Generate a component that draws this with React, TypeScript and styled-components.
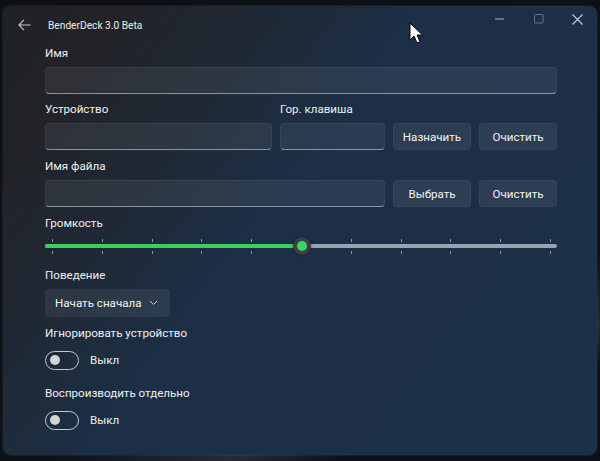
import React from "react";
import styled, { createGlobalStyle } from "styled-components";

const Global = createGlobalStyle`
  html, body { margin: 0; padding: 0; }
  body {
    width: 600px;
    height: 461px;
    overflow: hidden;
    background: #0d1016;
    font-family: Roboto, "Noto Sans", sans-serif;
  }
`;

const Desktop = styled.div`
  position: relative;
  width: 600px;
  height: 461px;
  padding: 6px 3px 0 3px;
  box-sizing: border-box;
  background:
    linear-gradient(160deg, transparent 70%, rgba(150,165,185,0.18) 80%, transparent 86%),
    #0d1016;
`;

const Window = styled.div`
  width: 594px;
  height: 449px;
  border-radius: 8px;
  overflow: hidden;
  display: flex;
  flex-direction: column;
  background: linear-gradient(127deg, #212226 0%, #212328 14%, #1f2936 30%, #1c2f46 46%, #1c3049 100%);
  box-shadow: 0 0 0 1px rgba(255,255,255,0.05);
  color: #f2f2f2;
`;

const TitleBar = styled.div`
  height: 37px;
  display: flex;
  align-items: center;
  flex-shrink: 0;
`;

const BackButton = styled.div`
  width: 45px;
  height: 37px;
  display: flex;
  align-items: center;
  padding-left: 15px;
  box-sizing: border-box;
  color: #c9cacc;
`;

const Title = styled.div`
  font-size: 10.2px;
  color: #eeeeee;
  flex: 1;
  padding-top: 1px;
`;

const Controls = styled.div`
  align-self: flex-start;
  display: flex;
  height: 26px;
`;

const CtlButton = styled.div`
  width: 39px;
  height: 26px;
  display: flex;
  align-items: center;
  justify-content: center;
  color: #c8ccd2;
`;

const Content = styled.div`
  padding: 0 40px 0 42px;
  display: flex;
  flex-direction: column;
`;

const Label = styled.div<{ $top?: number }>`
  height: 20px;
  line-height: 20px;
  font-size: 11.6px;
  color: #f0f0f0;
  margin-top: ${(p) => p.$top ?? 0}px;
  white-space: nowrap;
`;

const TextBox = styled.div`
  height: 27px;
  box-sizing: border-box;
  border-radius: 4px;
  background: rgba(255, 255, 255, 0.065);
  border: 1px solid rgba(255, 255, 255, 0.05);
  border-bottom: 1px solid rgba(220, 225, 232, 0.55);
`;

const Grid = styled.div<{ $top?: number }>`
  display: grid;
  grid-template-columns: 1fr 105px 78px 78px;
  column-gap: 8px;
  row-gap: 4px;
  margin-top: ${(p) => p.$top ?? 0}px;
`;

const Wide = styled(TextBox)`
  grid-column: 1 / span 2;
`;

const Button = styled.div`
  height: 27px;
  border-radius: 4px;
  background: rgba(255, 255, 255, 0.07);
  border: 1px solid rgba(255, 255, 255, 0.04);
  box-sizing: border-box;
  display: flex;
  align-items: center;
  justify-content: center;
  font-size: 11.6px;
  color: #f3f3f3;
`;

const Field = styled.div<{ $top?: number }>`
  margin-top: ${(p) => p.$top ?? 4}px;
`;

const SliderWrap = styled.div`
  position: relative;
  height: 22px;
  margin-top: 2px;
`;

const Track = styled.div`
  position: absolute;
  left: 0;
  right: 0;
  top: 9px;
  height: 4px;
  border-radius: 2px;
  background: #9aa2ad;
`;

const Fill = styled.div`
  position: absolute;
  left: 0;
  top: 9px;
  height: 4px;
  border-radius: 2px;
  background: #3ccf5e;
`;

const Ticks = styled.div<{ $top: number }>`
  position: absolute;
  left: 7px;
  right: 6px;
  top: ${(p) => p.$top}px;
  height: 3px;
  display: flex;
  justify-content: space-between;
`;

const Tick = styled.div`
  width: 1px;
  height: 3px;
  background: #8d96a2;
`;

const Thumb = styled.div`
  position: absolute;
  top: 2px;
  width: 18px;
  height: 18px;
  margin-left: -9px;
  border-radius: 50%;
  background: #3b3f45;
  box-shadow: 0 0 3px rgba(0, 0, 0, 0.45);
  display: flex;
  align-items: center;
  justify-content: center;
`;

const ThumbDot = styled.div`
  width: 10px;
  height: 10px;
  border-radius: 50%;
  background: #3fd462;
`;

const Dropdown = styled.div`
  width: 125px;
  height: 28px;
  box-sizing: border-box;
  border-radius: 4px;
  background: rgba(255, 255, 255, 0.065);
  display: flex;
  align-items: center;
  justify-content: space-between;
  padding: 0 12px 0 10px;
  font-size: 11.6px;
  color: #f3f3f3;
  white-space: nowrap;
`;

const ToggleRow = styled.div<{ $top: number }>`
  display: flex;
  align-items: center;
  gap: 11px;
  height: 20px;
  margin-top: ${(p) => p.$top}px;
  font-size: 11.6px;
  color: #f0f0f0;
`;

const Toggle = styled.div`
  width: 34px;
  height: 19px;
  box-sizing: border-box;
  border-radius: 10px;
  border: 1px solid #c4c7cc;
  display: flex;
  align-items: center;
  padding-left: 4px;
`;

const Knob = styled.div`
  width: 10px;
  height: 10px;
  border-radius: 50%;
  background: #d2d4d8;
`;

const Cursor = styled.svg`
  position: absolute;
  left: 409px;
  top: 22px;
`;

const ticks = Array.from({ length: 11 });

export default function App() {
  const value = 0.5;
  return (
    <>
      <Global />
      <Desktop>
        <Window>
          <TitleBar>
            <BackButton>
              <svg width="13" height="12" viewBox="0 0 13 12" fill="none" stroke="currentColor" strokeWidth="1.1">
                <path d="M12.5 6H1M6 0.8L0.9 6L6 11.2" />
              </svg>
            </BackButton>
            <Title>BenderDeck 3.0 Beta</Title>
            <Controls>
              <CtlButton>
                <svg width="10" height="2" viewBox="0 0 10 2">
                  <rect x="0" y="0.5" width="9" height="1" fill="currentColor" opacity="0.85" />
                </svg>
              </CtlButton>
              <CtlButton>
                <svg width="10" height="10" viewBox="0 0 10 10" fill="none" stroke="currentColor" strokeWidth="1" opacity="0.45">
                  <rect x="0.5" y="0.5" width="8.5" height="8.5" rx="1" />
                </svg>
              </CtlButton>
              <CtlButton>
                <svg width="11" height="11" viewBox="0 0 11 11" fill="none" stroke="currentColor" strokeWidth="1.1">
                  <path d="M0.5 0.5L10.5 10.5M10.5 0.5L0.5 10.5" />
                </svg>
              </CtlButton>
            </Controls>
          </TitleBar>
          <Content>
            <Label>Имя</Label>
            <Field>
              <TextBox />
            </Field>

            <Grid $top={5}>
              <Label>Устройство</Label>
              <Label>Гор. клавиша</Label>
              <span />
              <span />
              <TextBox />
              <TextBox />
              <Button>Назначить</Button>
              <Button>Очистить</Button>
            </Grid>

            <Grid $top={6}>
              <Label>Имя файла</Label>
              <span />
              <span />
              <span />
              <Wide />
              <Button>Выбрать</Button>
              <Button>Очистить</Button>
            </Grid>

            <Label $top={6}>Громкость</Label>
            <SliderWrap>
              <Ticks $top={4}>
                {ticks.map((_, i) => (
                  <Tick key={i} />
                ))}
              </Ticks>
              <Ticks $top={16}>
                {ticks.map((_, i) => (
                  <Tick key={i} />
                ))}
              </Ticks>
              <Track />
              <Fill style={{ width: `${value * 100}%` }} />
              <Thumb style={{ left: `calc(7px + (100% - 13px) * ${value})` }}>
                <ThumbDot />
              </Thumb>
            </SliderWrap>

            <Label $top={8}>Поведение</Label>
            <Field>
              <Dropdown>
                <span>Начать сначала</span>
                <svg width="9" height="6" viewBox="0 0 9 6" fill="none" stroke="#c9cdd3" strokeWidth="1">
                  <path d="M1 1L4.5 4.5L8 1" />
                </svg>
              </Dropdown>
            </Field>

            <Label $top={6}>Игнорировать устройство</Label>
            <ToggleRow $top={7}>
              <Toggle>
                <Knob />
              </Toggle>
              <span>Выкл</span>
            </ToggleRow>

            <Label $top={13}>Воспроизводить отдельно</Label>
            <ToggleRow $top={7}>
              <Toggle>
                <Knob />
              </Toggle>
              <span>Выкл</span>
            </ToggleRow>
          </Content>
        </Window>
        <Cursor width="16" height="24" viewBox="0 0 16 24">
          <path d="M1 1 L1 18 L5 14 L8 21 L11 19.8 L8 13 L13.5 13 Z" fill="#ffffff" stroke="#000000" strokeWidth="1" strokeLinejoin="round" />
        </Cursor>
      </Desktop>
    </>
  );
}
